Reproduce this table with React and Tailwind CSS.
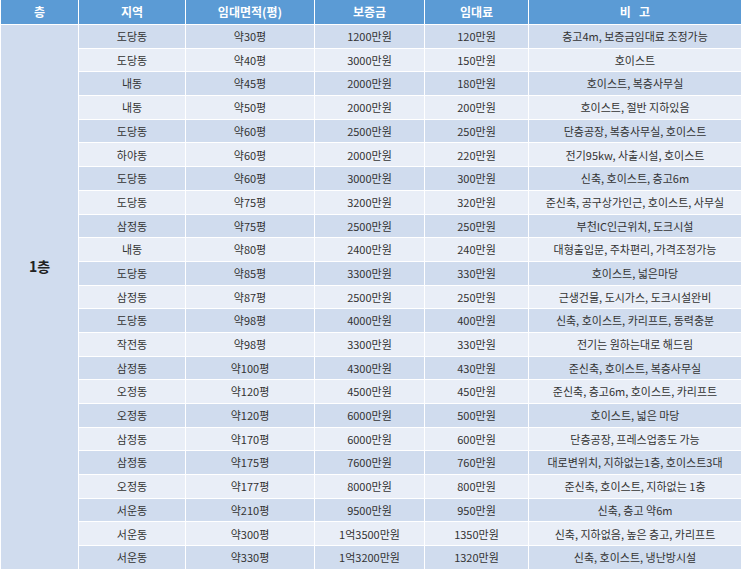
const rows = [
    ['도당동', '약30평', '1200만원', '120만원', '층고4m, 보증금임대료 조정가능'],
    ['도당동', '약40평', '3000만원', '150만원', '호이스트'],
    ['내동', '약45평', '2000만원', '180만원', '호이스트, 복층사무실'],
    ['내동', '약50평', '2000만원', '200만원', '호이스트, 절반 지하있음'],
    ['도당동', '약60평', '2500만원', '250만원', '단층공장, 복층사무실, 호이스트'],
    ['하야동', '약60평', '2000만원', '220만원', '전기95kw, 사출시설, 호이스트'],
    ['도당동', '약60평', '3000만원', '300만원', '신축, 호이스트, 층고6m'],
    ['도당동', '약75평', '3200만원', '320만원', '준신축, 공구상가인근, 호이스트, 사무실'],
    ['삼정동', '약75평', '2500만원', '250만원', '부천IC인근위치, 도크시설'],
    ['내동', '약80평', '2400만원', '240만원', '대형출입문, 주차편리, 가격조정가능'],
    ['도당동', '약85평', '3300만원', '330만원', '호이스트, 넓은마당'],
    ['삼정동', '약87평', '2500만원', '250만원', '근생건물, 도시가스, 도크시설완비'],
    ['도당동', '약98평', '4000만원', '400만원', '신축, 호이스트, 카리프트, 동력충분'],
    ['작전동', '약98평', '3300만원', '330만원', '전기는 원하는대로 해드림'],
    ['삼정동', '약100평', '4300만원', '430만원', '준신축, 호이스트, 복층사무실'],
    ['오정동', '약120평', '4500만원', '450만원', '준신축, 층고6m, 호이스트, 카리프트'],
    ['오정동', '약120평', '6000만원', '500만원', '호이스트, 넓은 마당'],
    ['삼정동', '약170평', '6000만원', '600만원', '단층공장, 프레스업종도 가능'],
    ['삼정동', '약175평', '7600만원', '760만원', '대로변위치, 지하없는1층, 호이스트3대'],
    ['오정동', '약177평', '8000만원', '800만원', '준신축, 호이스트, 지하없는 1층'],
    ['서운동', '약210평', '9500만원', '950만원', '신축, 층고 약6m'],
    ['서운동', '약300평', '1억3500만원', '1350만원', '신축, 지하없음, 높은 층고, 카리프트'],
    ['서운동', '약330평', '1억3200만원', '1320만원', '신축, 호이스트, 냉난방시설'],
];

const headers = ['층', '지역', '임대면적(평)', '보증금', '임대료', '비   고'];

export default function App() {
    return (
        <div className="w-[743px] h-[571px] bg-white overflow-hidden font-['Noto_Sans_CJK_KR','Noto_Sans',sans-serif]">
            <div className="ml-px grid grid-cols-[77px_106px_128px_109px_103px_212px] grid-rows-[24px_repeat(23,22.7px)] gap-px bg-white">
                {headers.map((h) => (
                    <div key={h} className="bg-[#5b9bd5] text-white text-[12px] font-bold flex items-center justify-center whitespace-pre">
                        {h}
                    </div>
                ))}
                {/* 1층 병합셀 */}
                <div className="row-span-23 bg-[#d0dcee] flex justify-center items-start pt-[231px] text-[14px] leading-[20px] font-bold text-[#222]">
                    1층
                </div>
                {rows.map((r, i) =>
                    r.map((c, j) => (
                        <div
                            key={i + '-' + j}
                            className={
                                'flex items-center justify-center text-[11px] text-[#333] whitespace-nowrap ' +
                                (i % 2 === 0 ? 'bg-[#d0dcee]' : 'bg-[#e9eef7]')
                            }
                        >
                            {c}
                        </div>
                    ))
                )}
            </div>
        </div>
    );
}
